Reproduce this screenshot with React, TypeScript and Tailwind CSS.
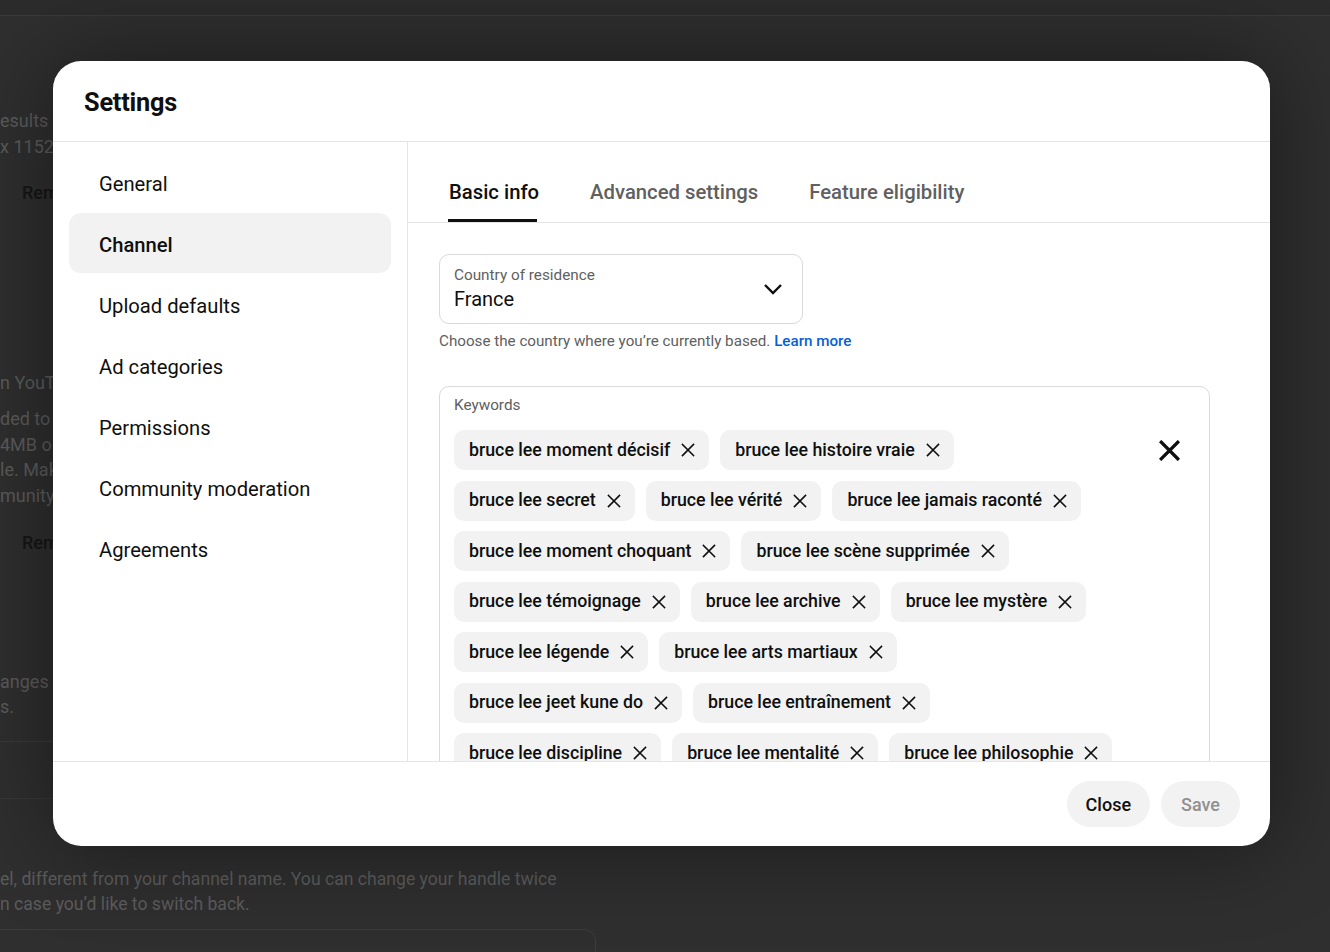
import React from "react";

const navItems = [
  "General",
  "Channel",
  "Upload defaults",
  "Ad categories",
  "Permissions",
  "Community moderation",
  "Agreements",
];

const keywordRows: string[][] = [
  ["bruce lee moment décisif", "bruce lee histoire vraie"],
  ["bruce lee secret", "bruce lee vérité", "bruce lee jamais raconté"],
  ["bruce lee moment choquant", "bruce lee scène supprimée"],
  ["bruce lee témoignage", "bruce lee archive", "bruce lee mystère"],
  ["bruce lee légende", "bruce lee arts martiaux"],
  ["bruce lee jeet kune do", "bruce lee entraînement"],
  ["bruce lee discipline", "bruce lee mentalité", "bruce lee philosophie"],
  ["bruce lee citation", "bruce lee combat"],
];

function XIcon({ size = 14, stroke = 1.6 }: { size?: number; stroke?: number }) {
  return (
    <svg width={size} height={size} viewBox="0 0 14 14" fill="none">
      <path
        d="M1.5 1.5L12.5 12.5M12.5 1.5L1.5 12.5"
        stroke="#0f0f0f"
        strokeWidth={stroke}
        strokeLinecap="square"
      />
    </svg>
  );
}

function Chip({ label }: { label: string }) {
  return (
    <span className="flex h-10 shrink-0 items-center gap-[11px] whitespace-nowrap rounded-[10px] bg-[#f2f2f2] pl-[15px] pr-[14px] text-[17.75px] font-medium text-[#0f0f0f]">
      {label}
      <XIcon />
    </span>
  );
}

function Backdrop() {
  return (
    <div className="flex flex-col text-[18px] leading-[26px] text-[#5c5c5c]">
      <div className="h-[16px] border-b border-[#3a3a3a] bg-[#2c2c2c]" />
      <p className="mt-[92px] whitespace-nowrap">
        esults c
        <br />x 1152
      </p>
      <span className="mt-[20px] pl-[22px] font-medium leading-[26px] text-[#161616]">Rem</span>
      <p className="mt-[164px] whitespace-nowrap">n YouT</p>
      <p className="mt-[10px] whitespace-nowrap leading-[25.5px]">
        ded to
        <br />
        4MB o
        <br />
        le. Mak
        <br />
        munity
      </p>
      <span className="mt-[22px] pl-[22px] font-medium text-[#161616]">Rem</span>
      <p className="mt-[113px] whitespace-nowrap leading-[25px]">
        anges
        <br />
        s.
      </p>
      <div className="mt-[22px] h-px w-[600px] bg-[#3a3a3a]" />
      <div className="mt-[56px] h-px w-[600px] bg-[#383838]" />
      <p className="mt-[68px] whitespace-nowrap text-[17.6px] leading-[25px]">
        el, different from your channel name. You can change your handle twice
        <br />n case you’d like to switch back.
      </p>
      <div className="mt-[12px] h-[60px] w-[596px] rounded-r-[12px] border border-l-0 border-[#3c3c3c]" />
    </div>
  );
}

export default function App() {
  return (
    <div
      className="relative h-[952px] w-full overflow-hidden bg-[#2f2f2f]"
      style={{ fontFamily: "Roboto, 'Noto Sans', sans-serif" }}
    >
      <Backdrop />

      <div className="absolute left-[53px] top-[61px] flex h-[785px] w-[1217px] flex-col overflow-hidden rounded-[28px] bg-white shadow-[0_0_90px_rgba(0,0,0,0.45)]">
        <div className="flex h-[81px] shrink-0 items-center border-b border-[#e5e5e5] pl-[31px] pt-[3px]">
          <h1 className="text-[25.3px] font-bold tracking-[-0.2px] text-[#0f0f0f]">Settings</h1>
        </div>

        <div className="flex min-h-0 flex-1">
          <nav className="flex w-[355px] shrink-0 flex-col gap-px border-r border-[#e5e5e5] px-4 pt-3">
            {navItems.map((item) => (
              <div
                key={item}
                className={
                  item === "Channel"
                    ? "-mt-[2px] mb-[2px] flex h-[60px] items-center rounded-[12px] bg-[#f2f2f2] pl-[30px] pt-[4px] text-[20.2px] font-medium text-[#0f0f0f]"
                    : "flex h-[60px] items-center rounded-[12px] pl-[30px] text-[20.2px] text-[#0f0f0f]"
                }
              >
                {item}
              </div>
            ))}
          </nav>

          <div className="flex min-w-0 flex-1 flex-col">
            <div className="flex h-[81px] shrink-0 items-end gap-[51px] border-b border-[#e5e5e5] pl-[41px]">
              <div className="flex flex-col">
                <span className="text-[20.3px] font-medium leading-6 text-[#0f0f0f]">Basic info</span>
                <span className="mt-[15px] h-[3px] w-[89px] -translate-x-px bg-[#0f0f0f]" />
              </div>
              <div className="flex flex-col">
                <span className="text-[20.3px] font-medium leading-6 text-[#606060]">Advanced settings</span>
                <span className="mt-[15px] h-[3px]" />
              </div>
              <div className="flex flex-col">
                <span className="text-[20.3px] font-medium leading-6 text-[#606060]">Feature eligibility</span>
                <span className="mt-[15px] h-[3px]" />
              </div>
            </div>

            <div className="min-h-0 flex-1 overflow-hidden pl-[31px] pt-[31px]">
              <div className="flex h-[70px] w-[364px] items-center justify-between rounded-[10px] border border-[#d9d9d9] pl-[14px] pr-[19px]">
                <div className="flex flex-col">
                  <span className="text-[15.3px] leading-[18px] text-[#606060]">Country of residence</span>
                  <span className="mt-[2px] text-[20px] leading-[26px] text-[#0f0f0f]">France</span>
                </div>
                <svg width="20" height="12" viewBox="0 0 20 12" fill="none">
                  <path d="M2 2L10 10L18 2" stroke="#0f0f0f" strokeWidth="2.4" />
                </svg>
              </div>
              <p className="mt-[7px] text-[15.2px] leading-5 text-[#606060]">
                Choose the country where you’re currently based.{" "}
                <span className="font-medium text-[#065fd4]">Learn more</span>
              </p>

              <div className="mt-[35px] w-[771px] rounded-[10px] border border-[#d9d9d9] pb-4 pl-[14px] pt-[9px]">
                <span className="block text-[15.3px] leading-[18px] text-[#606060]">Keywords</span>
                <div className="mt-4 flex">
                  <div className="flex flex-1 flex-col gap-[10.5px]">
                    {keywordRows.map((row, i) => (
                      <div key={i} className="flex gap-[11px]">
                        {row.map((k) => (
                          <Chip key={k} label={k} />
                        ))}
                      </div>
                    ))}
                  </div>
                  <div className="mr-[20px] flex h-10 w-10 items-center justify-center">
                    <XIcon size={21} stroke={2.2} />
                  </div>
                </div>
              </div>
            </div>
          </div>
        </div>

        <div className="flex h-[85px] shrink-0 items-center justify-end gap-[11px] border-t border-[#e5e5e5] pr-[30px]">
          <button className="h-[46px] rounded-full bg-[#f2f2f2] px-[19px] text-[18px] font-medium text-[#0f0f0f]">
            Close
          </button>
          <button className="h-[46px] rounded-full bg-[#f2f2f2] px-[20px] text-[18px] font-medium text-[#909090]">
            Save
          </button>
        </div>
      </div>
    </div>
  );
}
